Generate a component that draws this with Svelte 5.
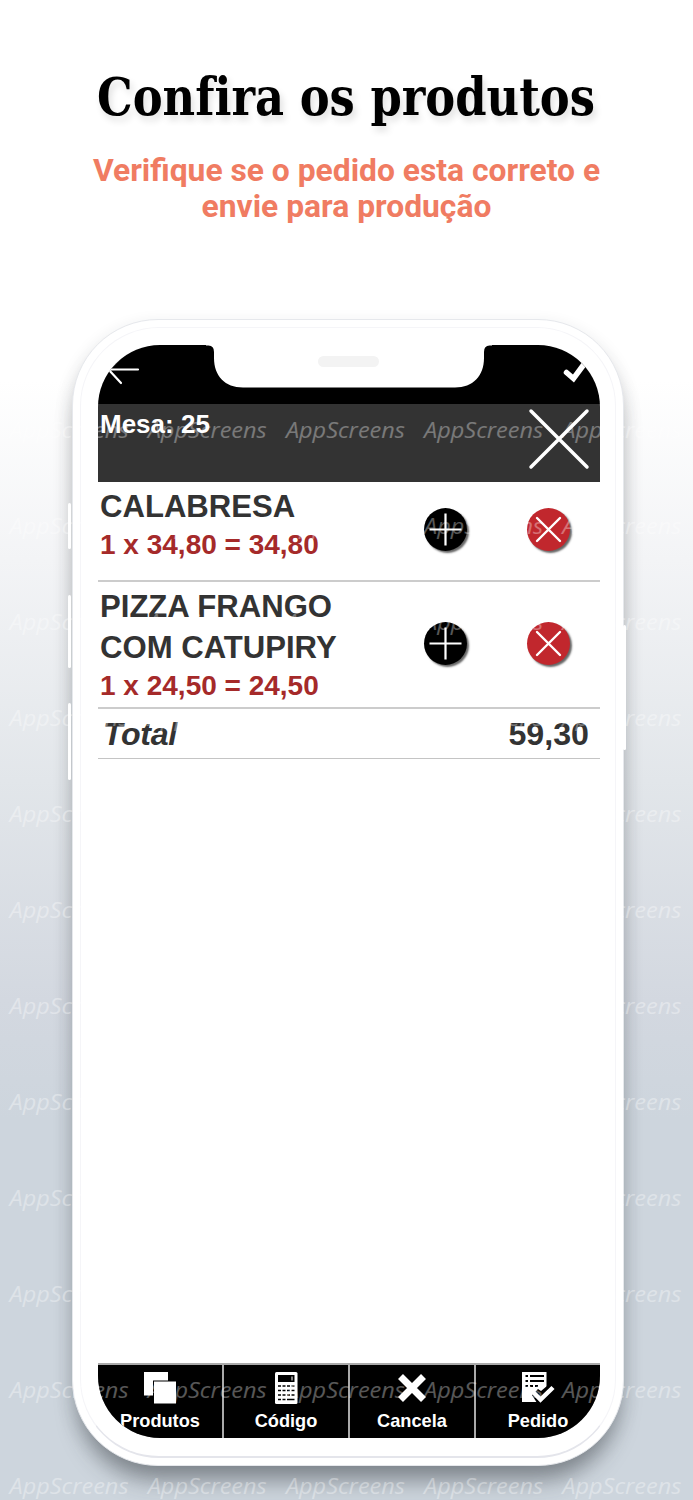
<script>
const items = [
    { name: 'CALABRESA', price: '1 x 34,80 = 34,80', size: 'short' },
    { name: 'PIZZA FRANGO COM CATUPIRY', price: '1 x 24,50 = 24,50', size: 'tall' }
]
const tabs = ['Produtos', 'Código', 'Cancela', 'Pedido']
const markRows = Array.from({ length: 12 }, (_, i) => 437.5 + i * 96)
const markCols = Array.from({ length: 5 }, (_, i) => 9.5 + i * 138.2)
const keyRows = [15, 19.5, 24, 28.5]
</script>

<div class="page">
    <header>
        <h1>
            <svg width="693" height="80" viewBox="0 0 693 80">
                <text x="97" y="55" textLength="498" lengthAdjust="spacingAndGlyphs">Confira os produtos</text>
            </svg>
        </h1>
        <p>Verifique se o pedido esta correto e envie para produção</p>
    </header>

    <div class="phone">
        <span class="key mute"></span>
        <span class="key up"></span>
        <span class="key down"></span>
        <span class="key power"></span>
        <div class="rim"></div>
        <main class="screen">
            <div class="topbar">
                <svg width="502" height="59" viewBox="0 0 502 59" fill="none" stroke="#fff">
                    <path d="M40 24.500H10M24 11L10.500 24.500l12.500 13.500" stroke-width="2.200" stroke-linecap="round" stroke-linejoin="round" />
                    <path d="M468.500 27.500l7 6 17-23" stroke-width="5.500" stroke-linecap="round" />
                    <path class="notch" d="M108 -2V0.500h2.500q5.500 0 5.500 6.500v6c0 18 11 29.500 29 29.500H357c18 0 29-11.500 29-29.500V7q0-6.500 5.500-6.500h2.500V-2z" />
                </svg>
                <span class="speaker"></span>
            </div>
            <div class="table">
                <strong>Mesa: 25</strong>
                <svg width="62" height="62" viewBox="0 0 62 62">
                    <path d="M3 3l56 56M59 3L3 59" stroke="#fff" stroke-width="3.500" stroke-linecap="round" />
                </svg>
            </div>
            {#each items as item}
                <div class={`item ${item.size}`}>
                    <div class="info">
                        <div class="name">{item.name}</div>
                        <div class="price">{item.price}</div>
                    </div>
                    <button class="add" aria-label="+">
                        <svg width="43" height="43" viewBox="0 0 43 43">
                            <path d="M21.500 5.500v32M5.500 21.500h32" stroke="#fff" stroke-width="2.200" />
                        </svg>
                    </button>
                    <button class="remove" aria-label="x">
                        <svg width="43" height="43" viewBox="0 0 43 43">
                            <path d="M10 10l23 23M33 10L10 33" stroke="#fff" stroke-width="2.400" stroke-linecap="round" />
                        </svg>
                    </button>
                </div>
            {/each}
            <div class="total">
                <em>Total</em>
                <span>59,30</span>
            </div>
            <nav>
                {#each tabs as tab, i}
                    <div class="tab">
                        <svg width="36" height="36" viewBox="0 0 36 36" fill="#fff">
                            {#if i === 0}
                                <path d="M2 2h24v8.500H11V25.500H2z" />
                                <path d="M12 11.500h22v22H12z" />
                            {:else if i === 1}
                                <rect x="7" y="2" width="22.500" height="32" rx="1.500" />
                                <path d="M10 5h16.500v7H10z" fill="#000" />
                                <path d="M24 6.500v4" stroke="#fff" />
                                {#each keyRows as y}
                                    <path d={`M10 ${y + 1}h16.500`} stroke="#000" stroke-width="1.500" stroke-dasharray={y > 28 ? '3 1.500 3 1.500 8' : '3 1.500'} />
                                {/each}
                            {:else if i === 2}
                                <path d="M6.500 6.500l23 23M29.500 6.500l-23 23" stroke="#fff" stroke-width="7" />
                            {:else}
                                <path d="M2 2h24.500v30H2z" />
                                <path d="M5.500 6h2.500M10 6h14M5.500 11h2.500M10 11h14M5.500 16h2.500M10 16h3M15 16h3" stroke="#000" stroke-width="1.800" />
                                <path d="M12 25l6-6 3 2 6-5v17H17z" fill="#000" />
                                <path d="M13.500 22.500l7 7L33 17.500" fill="none" stroke="#fff" stroke-width="4.500" />
                            {/if}
                        </svg>
                        <span>{tab}</span>
                    </div>
                {/each}
            </nav>
        </main>
    </div>

    <svg class="watermark" width="693" height="1500" viewBox="0 0 693 1500">
        {#each markRows as y}
            {#each markCols as x}
                <text {x} {y} textLength="119" lengthAdjust="spacingAndGlyphs">AppScreens</text>
            {/each}
        {/each}
    </svg>
</div>

<style>
:global(body) {
    margin: 0;
}

.page {
    position: relative;
    width: 693px;
    height: 1500px;
    overflow: hidden;
    background: linear-gradient(#fff 380px, #f3f4f6 560px, #e2e6ea 780px, #d3d8e0 1000px, #cdd5dd 1120px, #cdd5dd);
    font-family: "Liberation Sans", Arial, sans-serif;
}

header {
    height: 319px;
    padding-top: 60px;
    box-sizing: border-box;
    text-align: center;
}

h1 {
    margin: 0;
    height: 92px;
}

h1 text {
    font: bold 53px "DejaVu Serif Condensed", "DejaVu Serif", serif;
    font-variant-ligatures: none;
    text-shadow: 3px 5px 8px rgba(0, 0, 0, .12);
}

header p {
    width: 540px;
    margin: 0 auto;
    font: bold 31.800px/36px Roboto, sans-serif;
    color: #f07c62;
}

.phone {
    position: relative;
    width: 552px;
    height: 1147px;
    margin-left: 72px;
    padding: 25px;
    box-sizing: border-box;
    border-radius: 86px;
    background: #fff;
    border: 1px solid #e6e8ec;
    box-shadow: 0 22px 24px -8px rgba(40, 44, 50, .4), 0 8px 18px rgba(40, 44, 50, .16);
}

.rim {
    position: absolute;
    inset: 7px;
    border: 1px solid #f5f5f8;
    border-bottom: 2px solid #e4e5eb;
    border-radius: 79px;
}

.key {
    position: absolute;
    left: -5px;
    width: 3px;
    border-radius: 2px;
    background: #fff;
}

.mute {
    top: 183px;
    height: 46px;
}

.up {
    top: 275px;
    height: 73px;
}

.down {
    top: 383px;
    height: 77px;
}

.power {
    left: auto;
    right: -3px;
    top: 305px;
    height: 125px;
}

.screen {
    position: relative;
    display: flex;
    flex-direction: column;
    width: 502px;
    height: 1093px;
    overflow: hidden;
    border-radius: 62px;
    background: #fff;
}

.topbar {
    position: relative;
    height: 59px;
    background: #000;
}

.topbar svg {
    display: block;
}

.notch {
    fill: #fff;
    stroke: none;
}

.speaker {
    position: absolute;
    left: 220px;
    top: 11px;
    width: 61px;
    height: 11px;
    border-radius: 6px;
    background: #f3f3f3;
}

.table {
    display: flex;
    justify-content: space-between;
    height: 78px;
    padding: 4px 10px 0 2px;
    box-sizing: border-box;
    background: #333;
    color: #fff;
    font-size: 26px;
    line-height: 32px;
}

.item {
    display: flex;
    align-items: center;
    padding: 4px 29px 7px 2px;
    box-sizing: border-box;
    border-bottom: 2px solid #ccc;
    font-weight: bold;
}

.short {
    height: 100px;
}

.tall {
    height: 127px;
}

.info {
    align-self: flex-start;
    width: 324px;
}

.name {
    width: 250px;
    font-size: 31.100px;
    line-height: 41px;
    color: #333;
}

.price {
    font-size: 28px;
    line-height: 36px;
    color: #a52a2a;
}

button {
    flex: none;
    width: 43px;
    height: 43px;
    padding: 0;
    border: none;
    border-radius: 50%;
    box-shadow: 2px 2px 2px #666;
}

button svg {
    display: block;
}

.add {
    background: #000;
}

.remove {
    margin-left: 60px;
    background: #c1272d;
}

.total {
    display: flex;
    justify-content: space-between;
    height: 50px;
    padding: 1px 11px 0 5px;
    box-sizing: border-box;
    border-bottom: 1px solid #c4c4c4;
    color: #333;
    font-size: 32.200px;
    font-weight: bold;
    line-height: 48px;
}

.total em {
    letter-spacing: -.4px;
}

nav {
    display: grid;
    grid-template-columns: repeat(4, 1fr);
    gap: 2px;
    margin-top: auto;
    padding-top: 2px;
    background: #aaa;
}

.tab {
    display: flex;
    flex-direction: column;
    align-items: center;
    height: 73px;
    padding-top: 5px;
    box-sizing: border-box;
    background: #000;
    color: #fff;
    font-size: 18.200px;
    font-weight: bold;
    line-height: 31px;
}

.watermark {
    position: absolute;
    left: 0;
    top: 0;
    pointer-events: none;
}

.watermark text {
    font: italic 21px "Open Sans", sans-serif;
    fill: #fff;
    opacity: .34;
}
</style>
